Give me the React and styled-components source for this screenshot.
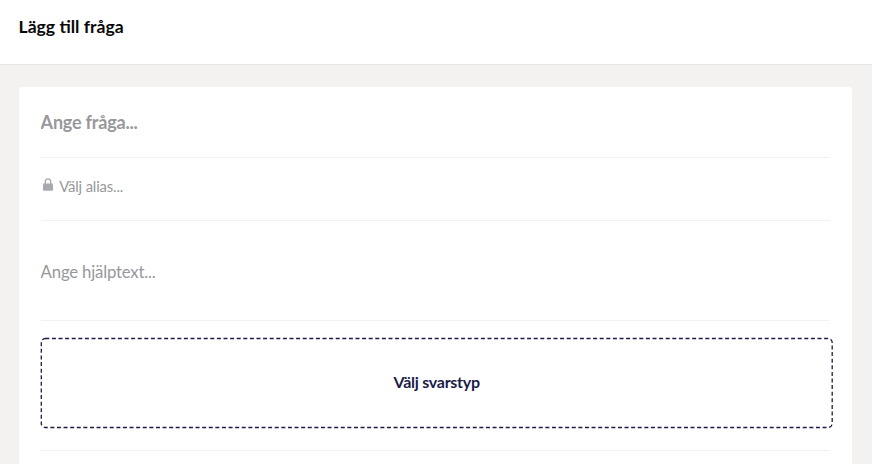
import styled, { createGlobalStyle } from 'styled-components';

export default function App() {
  return (
    <>
      <GlobalStyle />
      <Page>
        <Header>
          <Title>Lägg till fråga</Title>
        </Header>

        <Card>
          <Field $height='71px' $top='22px'>
            <QuestionInput placeholder='Ange fråga...' aria-label='Fråga' />
          </Field>

          <Field $height='63px' $top='16px'>
            <LockIcon />
            <AliasInput placeholder='Välj alias...' aria-label='Alias' />
          </Field>

          <Field $height='100px' $top='38px'>
            <HelpInput placeholder='Ange hjälptext...' aria-label='Hjälptext' />
          </Field>

          <AnswerSection>
            <AnswerButton type='button'>
              <DashedFrame />
              Välj svarstyp
            </AnswerButton>
          </AnswerSection>
        </Card>
      </Page>
    </>
  );
}

function LockIcon() {
  return (
    <Lock viewBox='0 0 10 13' aria-hidden='true'>
      <path d='M2.3 6V3.6a2.7 2.7 0 0 1 5.4 0V6' fill='none' stroke='#aaa9b0' strokeWidth='1.4' />
      <rect x='0' y='5.5' width='10' height='7.2' rx='0.9' fill='#aaa9b0' />
    </Lock>
  );
}

function DashedFrame() {
  return (
    <Frame aria-hidden='true'>
      <rect x='0.3' y='0.5' width='790.9' height='89' rx='4' />
    </Frame>
  );
}

const GlobalStyle = createGlobalStyle`
  * {
    box-sizing: border-box;
  }

  body {
    margin: 0;
    background-color: #f3f2f1;
    font-family: Lato, 'Liberation Sans', sans-serif;
    overflow: hidden;
  }
`;

const Page = styled.main`
  height: 464px;
  overflow: hidden;
`;

const Header = styled.header`
  height: 65px;
  padding: 15px 18.5px 0;
  background-color: #fff;
  border-bottom: 1px solid #e4e3e5;
`;

const Title = styled.h1`
  margin: 0;
  font-size: 17.6px;
  line-height: 23px;
  font-weight: 700;
  color: #08080a;
`;

const Card = styled.section`
  height: 420px;
  margin: 22px 20px 0 19px;
  padding: 0 22px 0 21.6px;
  background-color: #fff;
  border-radius: 3px;
`;

const Field = styled.div`
  display: flex;
  align-items: flex-start;
  height: ${(p) => p.$height};
  padding-top: ${(p) => p.$top};
  border-bottom: 1px solid #f3f2f3;
`;

const TextInput = styled.input`
  flex: 1;
  min-width: 0;
  padding: 0;
  border: 0;
  outline: 0;
  background: none;
  font-family: inherit;
  color: #1b1c40;

  &::placeholder {
    color: #98989c;
    opacity: 1;
  }
`;

const QuestionInput = styled(TextInput)`
  height: 26px;
  font-size: 18px;
  font-weight: 700;
  letter-spacing: -0.2px;
`;

const AliasInput = styled(TextInput)`
  height: 24px;
  font-size: 14.8px;
  letter-spacing: -0.15px;
`;

const HelpInput = styled(TextInput)`
  height: 24px;
  font-size: 16.8px;
  letter-spacing: -0.2px;
`;

const Lock = styled.svg`
  flex: none;
  width: 10px;
  height: 13px;
  margin: 4px 6.4px 0 2.2px;
`;

const AnswerSection = styled.div`
  height: 130px;
  padding-top: 17px;
  border-bottom: 1px solid #f3f2f3;
`;

const AnswerButton = styled.button`
  position: relative;
  width: calc(100% + 2.6px);
  height: 90px;
  padding: 0 0 3px;
  border: 0;
  background: none;
  font-family: inherit;
  font-size: 16px;
  font-weight: 700;
  letter-spacing: -0.27px;
  color: #1b1c48;
`;

const Frame = styled.svg`
  position: absolute;
  inset: 0;
  width: 100%;
  height: 100%;
  overflow: visible;
  fill: none;
  stroke: #1b1c48;
  stroke-width: 1.3;
  stroke-dasharray: 4 2.6;
`;
